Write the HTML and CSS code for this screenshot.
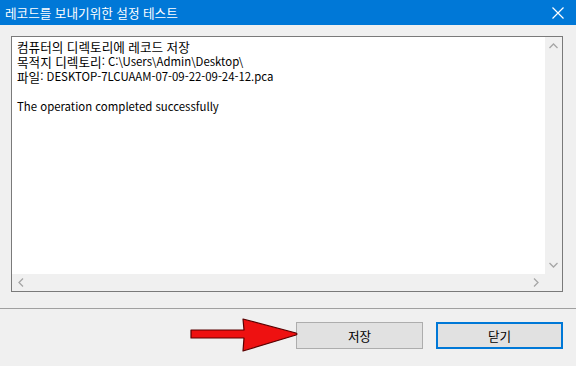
FILE: index.html
```html
<!DOCTYPE html>
<html lang="ko">
<head>
    <meta charset="UTF-8">
    <title>레코드를 보내기위한 설정 테스트</title>
    <link rel="stylesheet" href="styles.css">
</head>
<body>

<div class="dialog">
    <!-- Title bar -->
    <div class="titlebar">
        <span class="titlebar__text ko">레코드를 보내기위한 설정 테스트</span>
        <button class="titlebar__close">
            <svg width="12" height="12" viewBox="0 0 12 12">
                <path d="M0.5 0.5 L11.5 11.5 M11.5 0.5 L0.5 11.5" stroke="#fff" stroke-width="1.2" fill="none"/>
            </svg>
        </button>
    </div>

    <!-- Log box -->
    <div class="content">
        <div class="log">
            <div class="log__text">
                <div class="log__line"><span class="ko">컴퓨터의 디렉토리에 레코드 저장</span></div>
                <div class="log__line"><span class="ko">목적지 디렉토리</span>: C:\Users\Admin\Desktop\</div>
                <div class="log__line"><span class="ko">파일</span>: DESKTOP-7LCUAAM-07-09-22-09-24-12.pca</div>
                <div class="log__line">&nbsp;</div>
                <div class="log__line">The operation completed successfully</div>
            </div>
            <div class="log__vscroll">
                <svg width="9" height="6" viewBox="0 0 9 6"><path d="M0.5 5 L4.5 1 L8.5 5" stroke="#a6a6a6" stroke-width="1.3" fill="none"/></svg>
                <svg width="9" height="6" viewBox="0 0 9 6"><path d="M0.5 1 L4.5 5 L8.5 1" stroke="#a6a6a6" stroke-width="1.3" fill="none"/></svg>
            </div>
            <div class="log__hscroll">
                <svg width="6" height="9" viewBox="0 0 6 9"><path d="M5 0.5 L1 4.5 L5 8.5" stroke="#a6a6a6" stroke-width="1.3" fill="none"/></svg>
                <svg width="6" height="9" viewBox="0 0 6 9"><path d="M1 0.5 L5 4.5 L1 8.5" stroke="#a6a6a6" stroke-width="1.3" fill="none"/></svg>
            </div>
            <div class="log__corner"></div>
        </div>
    </div>

    <!-- Buttons -->
    <div class="footer">
        <svg class="footer__arrow" width="112" height="36" viewBox="0 0 112 36">
            <path d="M2 13 L55 13 L54 2 L107 16 Q109 17 107 18 L54 34 L55 21 L2 21 Z" fill="#ee1111" stroke="#5a0000" stroke-width="1.2" stroke-linejoin="round"/>
        </svg>
        <button class="btn"><span class="ko">저장</span></button>
        <button class="btn btn--default"><span class="ko">닫기</span></button>
    </div>
</div>

</body>
</html>
```

FILE: styles.css
```css
* {
    box-sizing: border-box;
}
body {
    margin: 0;
    background: #f0f0f0;
    font-family: "Noto Sans CJK KR", sans-serif;
    font-size: 11.4px;
    color: #000;
}
.ko {
    font-size: 12.6px;
}

/* Title bar */
.dialog {
    width: 576px;
    height: 366px;
    display: flex;
    flex-direction: column;
}
.titlebar {
    height: 25px;
    background: #0078d7;
    display: flex;
    align-items: center;
    justify-content: space-between;
    padding-left: 5px;
}
.titlebar__text {
    color: #fff;
    line-height: 16px;
}
.titlebar__close {
    width: 32px;
    height: 25px;
    margin-right: 2px;
    background: transparent;
    border: none;
    padding: 0;
    display: flex;
    align-items: center;
    justify-content: center;
}

/* Log box */
.content {
    padding: 11px 13px 0 11px;
}
.log {
    height: 256px;
    border: 1px solid #7a7a7a;
    background: #fff;
    display: grid;
    grid-template-columns: 1fr 17px;
    grid-template-rows: 1fr 17px;
}
.log__text {
    padding: 2px 5px;
    white-space: nowrap;
    overflow: hidden;
}
.log__line {
    height: 15px;
    line-height: 15px;
}
.log__line .ko {
    display: inline-block;
    height: 15px;
    line-height: 15px;
    vertical-align: top;
}
.log__vscroll {
    background: #f0f0f0;
    display: flex;
    flex-direction: column;
    justify-content: space-between;
    align-items: center;
    padding: 6px 0 6px;
}
.log__hscroll {
    background: #f0f0f0;
    display: flex;
    justify-content: space-between;
    align-items: center;
    padding: 0 6px 0 6px;
}
.log__corner {
    background: #f0f0f0;
}

/* Footer */
.footer {
    margin-top: 16px;
    border-top: 1px solid #a0a0a0;
    flex: 1;
    display: flex;
    justify-content: flex-end;
    align-items: flex-start;
    gap: 13px;
    padding: 13px 13px 0 0;
    position: relative;
}
.btn {
    width: 127px;
    height: 27px;
    background: #e1e1e1;
    border: 1px solid #adadad;
    font-family: "Noto Sans CJK KR", sans-serif;
    font-size: 12px;
    color: #000;
    padding: 0;
}
.btn--default {
    border: 2px solid #0078d7;
}
.footer__arrow {
    position: absolute;
    left: 189px;
    top: 8px;
}
```
